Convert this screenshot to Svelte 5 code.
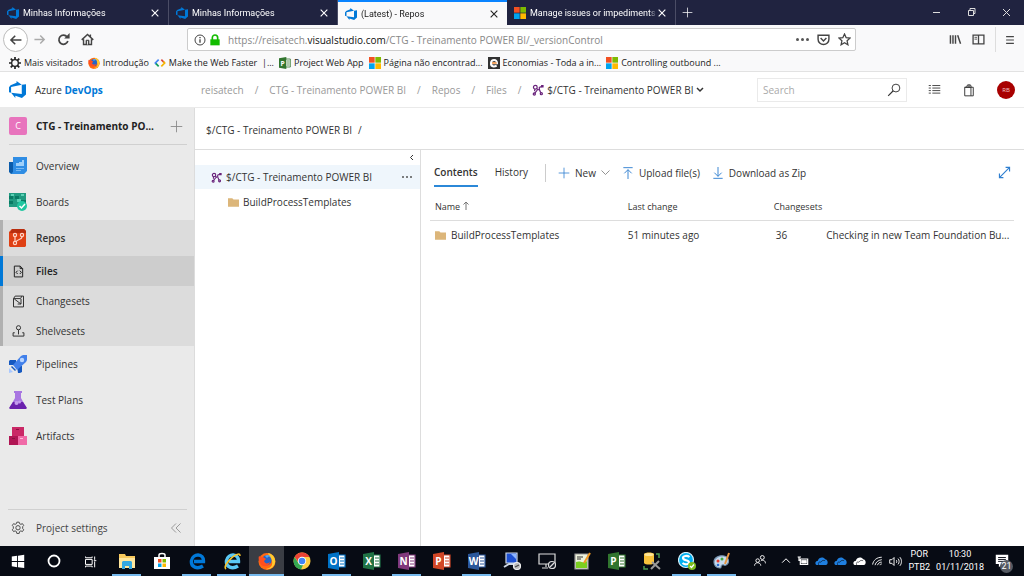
<script lang="ts">
	type Tab = { title: string; icon: string; active?: boolean };
	type NavItem = { label: string; icon: string; kind?: 'hub' | 'sub'; current?: boolean };
	type App = { name: string; running?: boolean; active?: boolean };

	const tabs: Tab[] = [
		{ title: 'Minhas Informações', icon: 'devops' },
		{ title: 'Minhas Informações', icon: 'devops' },
		{ title: '(Latest) - Repos', icon: 'devops', active: true },
		{ title: 'Manage issues or impediments', icon: 'microsoft' }
	];

	const bookmarks = [
		{ title: 'Mais visitados', icon: 'gear' },
		{ title: 'Introdução', icon: 'firefox' },
		{ title: 'Make the Web Faster  |...', icon: 'code' },
		{ title: 'Project Web App', icon: 'project' },
		{ title: 'Página não encontrad...', icon: 'microsoft' },
		{ title: 'Economias - Toda a in...', icon: 'economias' },
		{ title: 'Controlling outbound ...', icon: 'microsoft' }
	];

	const crumbs = ['reisatech', 'CTG - Treinamento POWER BI', 'Repos', 'Files'];

	const nav: NavItem[] = [
		{ label: 'Overview', icon: 'overview' },
		{ label: 'Boards', icon: 'boards' },
		{ label: 'Repos', icon: 'repos', kind: 'hub' },
		{ label: 'Files', icon: 'files', kind: 'sub', current: true },
		{ label: 'Changesets', icon: 'changesets', kind: 'sub' },
		{ label: 'Shelvesets', icon: 'shelvesets', kind: 'sub' },
		{ label: 'Pipelines', icon: 'pipelines' },
		{ label: 'Test Plans', icon: 'testplans' },
		{ label: 'Artifacts', icon: 'artifacts' }
	];

	const apps: App[] = [
		{ name: 'explorer', running: true },
		{ name: 'store' },
		{ name: 'edge', running: true },
		{ name: 'ie', running: true },
		{ name: 'firefox', running: true, active: true },
		{ name: 'chrome' },
		{ name: 'outlook', running: true },
		{ name: 'excel' },
		{ name: 'onenote', running: true },
		{ name: 'powerpoint' },
		{ name: 'word', running: true },
		{ name: 'remote' },
		{ name: 'monitor' },
		{ name: 'notepad' },
		{ name: 'project' },
		{ name: 'database' },
		{ name: 'skype', running: true },
		{ name: 'paint', running: true }
	];

	const office: Record<string, [string, string]> = {
		outlook: ['O', '#0072c6'],
		excel: ['X', '#217346'],
		onenote: ['N', '#80397b'],
		powerpoint: ['P', '#d24726'],
		word: ['W', '#2b579a'],
		project: ['P', '#31752f']
	};

	let search = $state('');
	let url = $state('https://reisatech.visualstudio.com/CTG - Treinamento POWER BI/_versionControl');
	let urlFocused = $state(false);
</script>

{#snippet icon(name: string, size: number)}
	<svg class="icon" width={size} height={size} viewBox="0 0 18 18" fill="none" stroke="currentColor" stroke-width="1.2" aria-hidden="true">
		{#if name === 'devops'}
			<path fill="#0078d7" stroke="none" transform="scale(.75)" d="M0 8.877L2.247 5.910l8.405-3.416V.022l7.370 5.393L2.966 8.338v8.225L0 15.707zm24-4.450v14.651l-5.753 4.900-9.303-3.057v3.056l-5.978-7.416 15.057 1.798V5.415z" />
		{:else if name === 'microsoft'}
			<g stroke="none">
				<path fill="#f25022" d="M0 0h8.500v8.500H0z" /><path fill="#7fba00" d="M9.500 0H18v8.500H9.500z" />
				<path fill="#00a4ef" d="M0 9.500h8.500V18H0z" /><path fill="#ffb900" d="M9.500 9.500H18V18H9.500z" />
			</g>
		{:else if name === 'gear'}
			<circle cx="9" cy="9" r="5" stroke-width="2" />
			<path stroke-width="2.600" d="M9 0v4M9 14v4M0 9h4M14 9h4M2.600 2.600l3 3M12.400 12.400l3 3M2.600 15.400l3-3M12.400 5.600l3-3" />
		{:else if name === 'settings'}
			<path d="M7.500 1.500h3l.6 2 1.600.8 2-.9 1.600 2.300-1.300 1.600v2.400l1.300 1.600-1.600 2.300-2-.9-1.600.8-.6 2.500h-3l-.6-2.500-1.600-.8-2 .9-1.600-2.300L3 9.700V7.300L1.700 5.700l1.600-2.300 2 .9 1.600-.8z" />
			<circle cx="9" cy="8.700" r="2.800" />
		{:else if name === 'firefox'}
			<g stroke="none">
				<circle cx="9" cy="9.500" r="8.500" fill="#ff6a13" />
				<path fill="#ffcb2f" d="M10 1c5 1 8 5 7 10-1 4-5 7-9 6 5-1 7-4 6-8C13 5 11 5 10 1z" />
				<circle cx="8.500" cy="8.500" r="5" fill="#2464c8" />
				<path fill="#ff4f1f" d="M1 4c1 1 2 1 4 1l3 2-2 2c1 3 4 3 6 1-1 5-8 6-10 1C1 9 0 6 1 4z" />
				<path fill="#4ba7f4" d="M7 4c2-2 5-1 6 1-2-1-3 0-4 1z" />
			</g>
		{:else if name === 'code'}
			<path stroke="#4285f4" stroke-width="2.500" d="M7 4L2 9l2 2" /><path stroke="#0f9d58" stroke-width="2.500" d="M3 10l4 4" />
			<path stroke="#db4437" stroke-width="2.500" d="M11 4l4 4" /><path stroke="#f4b400" stroke-width="2.500" d="M11 14l5-5-2-2" />
		{:else if name === 'economias'}
			<path fill="#333" stroke="none" d="M0 0h18v18H0z" />
			<path stroke="#fff" stroke-width="3" d="M5 9.500h8.500C14 3 5 3 4.500 9s5 6 8.500 4" /><path stroke="#f58220" stroke-width="2" d="M6 9h7" />
		{:else if name === 'overview'}
			<g stroke="none">
				<path fill="#0b5cab" d="M0 5h6v12H2l-2-2z" /><path fill="#2f8de4" d="M4 0h14v14l-3 3H2l2-2z" />
				<path fill="#9fd0fa" d="M7 6h3v3H7zM10 5h3v4h-3zM13 3h2v6h-2z" /><path fill="#78b9f2" d="M7 11h8v1H7zM7 13h5v1H7z" />
			</g>
		{:else if name === 'boards'}
			<g stroke="none">
				<path fill="#219b81" d="M0 0h17v14H0z" /><path fill="#087a64" d="M0 3h4v3H0zM6 3h4v3H6zM0 8h4v3H0zM12 7h5v4h-5z" />
				<path fill="#5bd1b5" d="M2 1h3v2H2zM8 6h4v3H8zM12 1h3v2h-3z" /><circle cx="13" cy="13" r="5" fill="#20c6a0" />
			</g>
			<path stroke="#fff" stroke-width="1.500" d="M10.500 13l2 2 3.500-4" />
		{:else if name === 'repos'}
			<path fill="#df4014" stroke="none" d="M3 0h12l2 2v15l-1 1H1l-1-1V3z" /><path fill="#b82d0e" stroke="none" d="M3 0h12l2 2v2H1z" />
			<g stroke="#ffd5c7"><circle cx="6" cy="6" r="1.600" /><circle cx="13" cy="6" r="1.600" /><circle cx="6" cy="14" r="1.600" /><path d="M6 8v4M13 8c0 3-5 2-6 5" /></g>
		{:else if name === 'files'}
			<path d="M4 2.500h7l3 3v10H4zM11 2.500v3h3M8 8l-2 2 2 2M10.500 8l2 2-2 2" />
		{:else if name === 'changesets'}
			<path d="M3 15.500V5.500l2-3h10v13zM3 5.500h8.500l1.500-3M4 6l8 6M12 6v6H8" />
		{:else if name === 'shelvesets'}
			<circle cx="9" cy="4.500" r="2.500" /><path d="M9 7v5.500M2.500 10.500v4h13v-4M2.500 10.500h2M13.500 10.500h2" />
		{:else if name === 'pipelines'}
			<g stroke="none">
				<path fill="#1558c0" d="M1 5h6v5H0V6zM8 11h5v6l-2 1H9z" /><path fill="#4280ea" d="M4 10l8-9 2-1h4v5l-1 2-9 8z" />
				<path fill="#1558c0" d="M3 11l4 4-1 1-4-4z" /><circle cx="13" cy="5" r="2.200" fill="#b9d5ff" />
				<path fill="#a9c8ff" d="M0 13l4 4-4 1z" />
			</g>
		{:else if name === 'testplans'}
			<g stroke="none">
				<path fill="#a876e1" d="M5 0h8v2h-1v5l5 9-1 2H2l-1-2 5-9V2H5z" /><path fill="#6a20ad" d="M4 11h10l4 6-1 1H1l-1-1z" />
				<circle cx="7.500" cy="12" r="2" fill="#c49bed" /><circle cx="10.500" cy="11" r="1.500" fill="#c49bed" />
			</g>
		{:else if name === 'artifacts'}
			<g stroke="none">
				<path fill="#ca2866" d="M3 0h12v9H3z" /><path fill="#b01554" d="M0 9h9v9H0z" /><path fill="#f06aa7" d="M9 9h9v9H9z" />
				<path fill="#8e0d40" d="M7 2h3v1H7zM3 11h3v1H3z" /><path fill="#ffb9d7" d="M11 11h3v1h-3z" />
			</g>
		{:else if name === 'branch'}
			<g stroke="#68217a" stroke-width="1.800">
				<circle cx="5" cy="5" r="2.800" /><circle cx="3.500" cy="15" r="1.600" /><circle cx="14" cy="14.500" r="1.600" />
				<path d="M15 3.500l-4 1.500v3l2 5M7 7l3 2M8 9l-4 5M4 8v3" /><path fill="#68217a" d="M14.500 2.500h2v2h-2z" />
			</g>
		{:else if name === 'folder'}
			<path fill="#dcb67a" stroke="none" d="M0 2h7l2 2h9v12H0z" />
		{:else if name === 'plus'}
			<path d="M9 1v16M1 9h16" />
		{:else if name === 'close'}
			<path stroke-width="2" d="M3 3l12 12M15 3L3 15" />
		{:else if name === 'chevron'}
			<path stroke-width="1.600" d="M1 5l8 8 8-8" />
		{:else if name === 'upload'}
			<path stroke-width="1.400" d="M2 1h14M9 18V4M3.500 9.500L9 4l5.500 5.500" />
		{:else if name === 'download'}
			<path stroke-width="1.400" d="M2 17h14M9 0v14M3.500 8.500L9 14l5.500-5.500" />
		{:else if name === 'expand'}
			<path stroke-width="1.600" d="M2 16L16 2M10.500 2H16v5.500M2 10.500V16h5.500" />
		{:else if name === 'back'}
			<path stroke-width="2" d="M16 9H3M8 3.500L2.500 9 8 14.500" />
		{:else if name === 'forward'}
			<path stroke-width="2" d="M2 9h13M10 3.500L15.500 9 10 14.500" />
		{:else if name === 'reload'}
			<path stroke-width="2.400" d="M14 5.500A6.300 6.300 0 1 0 15 11" /><path fill="currentColor" stroke="none" d="M10 7.500h7.500V0z" />
		{:else if name === 'home'}
			<path stroke-width="2" d="M1 9.500L9 2l8 7.500M3.500 8.500V16h11V8.500M13 2v4" /><path fill="currentColor" d="M7 10h4v6H7z" /><path stroke="#fff" d="M9 11v5" />
		{:else if name === 'info'}
			<circle cx="9" cy="9" r="7.500" stroke-width="1.500" /><path stroke-width="2" d="M9 8v5M9 4.500v2" />
		{:else if name === 'lock'}
			<path stroke="#12bc00" stroke-width="2.500" d="M5 9V5.500a4 4 0 0 1 8 0V9" /><path fill="#12bc00" stroke="none" d="M2 8h14v9H2z" />
		{:else if name === 'pocket'}
			<path stroke-width="2" d="M1.500 3h15v5.500a7.500 7.500 0 0 1-15 0zM5 7l4 4 4-4" />
		{:else if name === 'star'}
			<path stroke-width="1.800" d="M9 1.500l2.300 5 5.200.6-3.900 3.700 1.100 5.500L9 13.500l-4.700 2.800 1.100-5.500L1.500 7.100l5.200-.6z" />
		{:else if name === 'library'}
			<path stroke-width="2" d="M2 3v12M5.500 3v12M9 3v12M12 3l4 12" />
		{:else if name === 'sidebar'}
			<path stroke-width="1.800" d="M1.500 3h15v12h-15zM9 3v12" /><path d="M3.500 6H7M3.500 8.500H7" />
		{:else if name === 'menu'}
			<path stroke-width="2" d="M2 3h14M2 9h14M2 15h14" />
		{:else if name === 'search'}
			<circle cx="11.500" cy="6.500" r="5" /><path stroke-width="1.500" d="M8 10l-6.500 6.500" />
		{:else if name === 'list'}
			<path d="M6 3.500h11M6 7h11M6 10.500h11M6 14h11M1 3.500h3M1 7h3M1 10.500h3M1 14h3" />
		{:else if name === 'bag'}
			<path d="M3.500 5.500h8v11h-8zM3.500 5.500h11v11h-3M6 5.500l1-3h4l1 3M9 5.500V2" />
		{:else if name === 'start'}
			<path fill="#fff" stroke="none" d="M2 4l6-1v6H2zM9 3l7-1v7H9zM2 10h6v6l-6-1zM9 10h7v7l-7-1z" />
		{:else if name === 'cortana'}
			<circle cx="9" cy="9" r="5.500" stroke-width="1.800" />
		{:else if name === 'taskview'}
			<path d="M3 6.500h8v6H3zM3 3v1.500h8V3M3 16v-1.500h8V16M14 3v4M14 9v7M13 8h3" />
		{:else if name === 'explorer'}
			<g stroke="none"><path fill="#f7c95c" d="M1 2h6l1 2h9v12H1z" /><path fill="#ffe69c" d="M1 6h16v10H1z" /><path fill="#35a8df" d="M4 10l1-1h8l1 1v7h-3v-3H7v3H4z" /></g>
		{:else if name === 'store'}
			<path fill="#fff" stroke="none" d="M1 5h16v12H1z" /><path stroke="#fff" stroke-width="1.500" d="M6 6V3c0-2 6-2 6 0v3" />
			<g stroke="none"><path fill="#f25022" d="M5 7h3.500v3.500H5z" /><path fill="#7fba00" d="M9.500 7H13v3.500H9.500z" /><path fill="#00a4ef" d="M5 11.500h3.500V15H5z" /><path fill="#ffb900" d="M9.500 11.500H13V15H9.500z" /></g>
		{:else if name === 'edge' || name === 'ie'}
			<path stroke={name === 'edge' ? '#0078d7' : '#5bc9f5'} stroke-width="3.400" d="M6 9.500h9.500C16 1 5 1 3.500 8.500c-1 7 6 9 11.500 5.500" />
			{#if name === 'ie'}
				<path stroke="#f6c229" stroke-width="1.600" d="M3 17c-4-3 8-15 13-15 1 0 1 1 1 2" />
			{/if}
		{:else if name === 'chrome'}
			<g stroke="none"><circle cx="9" cy="9" r="8.500" fill="#ffcd40" /><path fill="#ea4335" d="M1.600 5a8.500 8.500 0 0 1 15 0H9L6 11z" /><path fill="#34a853" d="M1.600 5L6 12l4 1-2 4.500A8.500 8.500 0 0 1 1.600 5z" /><circle cx="9" cy="9" r="4.200" fill="#fff" /><circle cx="9" cy="9" r="3.300" fill="#4285f4" /></g>
		{:else if office[name]}
			<path fill="#fff" stroke={office[name][1]} d="M9 3h8v12H9z" /><path stroke={office[name][1]} d="M12 6h4M12 9h4M12 12h4" />
			<path fill={office[name][1]} stroke="none" d="M0 2l11-2v18L0 16z" />
			<text x="5.500" y="13" text-anchor="middle" fill="#fff" stroke="none" font-size="10" font-weight="700">{office[name][0]}</text>
		{:else if name === 'remote'}
			<path fill="#1c4fd0" stroke="#cdd7e4" d="M3 1h11v10H3z" /><path fill="#8bb4ff" stroke="none" d="M8 2h5v5z" /><path stroke="#cdd7e4" stroke-width="2" d="M1 15l5-3h6" /><circle cx="14" cy="14" r="3.500" fill="#bbb" stroke="#eee" /><path stroke="#444" d="M12 15l4-2" />
		{:else if name === 'monitor'}
			<path stroke="#ddd" d="M1 2h16v10H1zM8 12v3M4 16h6" /><circle cx="14" cy="13" r="3.500" fill="#111722" stroke="#ddd" /><path stroke="#ddd" d="M12 15l4-4" />
		{:else if name === 'notepad'}
			<path fill="#eef3dd" stroke="#999" d="M2 2h13v15H2z" /><path fill="#7bcf20" stroke="none" d="M3 10c4-2 8 2 11-1v7H3z" /><path stroke="#333" d="M4 5h6M4 7h4" /><path stroke="#f29a24" stroke-width="2" d="M17 1l-6 10" />
		{:else if name === 'database'}
			<path fill="#f8c23b" stroke="none" d="M1 2c1-2 9-2 10 0v9c-1 2-9 2-10 0z" /><ellipse cx="6" cy="2.500" rx="4.500" ry="1.500" fill="#ffe699" stroke="none" /><path stroke="#4f9c4f" stroke-width="1.500" d="M13 2h3v4M1 14v3h4" /><path stroke="#999" stroke-width="2" d="M8 17l8-8M9 10l8 7" />
		{:else if name === 'skype'}
			<circle cx="8" cy="8" r="7.500" fill="#00aff0" stroke="#d6f2fd" /><path stroke="#fff" stroke-width="2.200" d="M11.500 5C9 3 5 4 5 6c0 3 6 1.500 6 4.500 0 2-4 2.500-6.500.5" /><circle cx="14" cy="14" r="4" fill="#7cbb1c" stroke="none" /><path stroke="#fff" d="M12 14l1.500 1.500L16 12.500" />
		{:else if name === 'paint'}
			<path fill="#c7dcef" stroke="#7896b3" d="M1 10c0-4 5-7 10-6s6 7 2 9c-2 1-2-1-4 0s0 3-2 3c-4 0-6-3-6-6z" />
			<g stroke="none"><circle cx="5" cy="9" r="1.500" fill="#e33e32" /><circle cx="9" cy="7" r="1.500" fill="#42a83c" /><circle cx="5" cy="13" r="1.300" fill="#2e6ed0" /></g><path stroke="#e79642" stroke-width="2" d="M16 1l-4 11" />
		{:else if name === 'people'}
			<circle cx="12" cy="4.500" r="2.500" /><circle cx="6" cy="8.500" r="2.300" /><path d="M2 15c0-5 8-5 8 0M10 9c2-2 6-1 6 3" />
		{:else if name === 'up'}
			<path stroke-width="1.800" d="M2 12l7-7 7 7" />
		{:else if name === 'battery'}
			<path stroke-width="1.800" d="M5 6h11v8H5zM16 8v4M1 3h5M3 3v5h3" /><path fill="currentColor" d="M7 8h7v4H7z" />
		{:else if name === 'cloud'}
			<path fill="currentColor" stroke="none" d="M2 14c-3-2-1-6 2-6 1-5 8-6 10-2 4 0 5 7 1 8z" /><path stroke="#070b14" stroke-width=".8" d="M5 14c-1-4 1-5 3-4 2-3 4-3 6-2" />
		{:else if name === 'wifi'}
			<path stroke-width="1.500" d="M1 14C2 7 8 2 16 2M5 15c1-5 5-8 11-9M9 15c1-3 3-5 7-5M13 15c0-1 1-2 3-2" />
		{:else if name === 'volume'}
			<path stroke-width="1.300" d="M1 6.500h3l3-3v11l-3-3H1zM10 7c1 1 1 3 0 4M12.500 5c2 2 2 6 0 8M15 3c3 3 3 9 0 12" />
		{:else if name === 'message'}
			<path fill="#fff" stroke="none" d="M1 1h16v12H9l-4 4v-4H1z" /><path stroke="#070b14" d="M4 4.500h10M4 7h10M4 9.500h7" />
		{/if}
	</svg>
{/snippet}

<div class="screen">
	<div class="tabbar">
		{#each tabs as tab}
			<div class="tab" class:active={tab.active}>
				{@render icon(tab.icon, 12)}
				<span class="title">{tab.title}</span>
				<button aria-label="Close tab">{@render icon('close', 10)}</button>
			</div>
		{/each}
		<button class="new-tab" aria-label="New tab">{@render icon('plus', 11)}</button>
		<div class="window-controls">
			<button aria-label="Minimize"><svg width="9" height="9" viewBox="0 0 9 9" stroke="#ddd"><path d="M1 4.500h7" /></svg></button>
			<button aria-label="Restore"><svg width="9" height="9" viewBox="0 0 9 9" stroke="#ddd" fill="none"><path d="M1.500 2.500h5v5h-5zM3 2.500v-2h5v5H6.500" /></svg></button>
			<button aria-label="Close"><svg width="9" height="9" viewBox="0 0 9 9" stroke="#ddd"><path d="M1 1l7 7M8 1L1 8" /></svg></button>
		</div>
	</div>

	<div class="toolbar">
		<button class="back" aria-label="Back">{@render icon('back', 14)}</button>
		<button class="forward" aria-label="Forward">{@render icon('forward', 13)}</button>
		<button aria-label="Reload">{@render icon('reload', 13)}</button>
		<button aria-label="Home">{@render icon('home', 13)}</button>
		<div class="url" class:editing={urlFocused}>
			{@render icon('info', 12)}
			{@render icon('lock', 12)}
			<div class="address">
				<input aria-label="Address" bind:value={url} onfocus={() => (urlFocused = true)} onblur={() => (urlFocused = false)} />
				{#if !urlFocused}
					<div class="display" aria-hidden="true">https://reisatech.<b>visualstudio.com</b>/CTG - Treinamento POWER BI/_versionControl</div>
				{/if}
			</div>
			<button class="dots" aria-label="Page actions"><i></i><i></i><i></i></button>
			<button aria-label="Save to Pocket">{@render icon('pocket', 13)}</button>
			<button aria-label="Bookmark">{@render icon('star', 13)}</button>
		</div>
		<div class="tools">
			<button aria-label="Library">{@render icon('library', 13)}</button>
			<button aria-label="Sidebars">{@render icon('sidebar', 13)}</button>
			<button class="menu" aria-label="Menu">{@render icon('menu', 10)}</button>
		</div>
	</div>

	<div class="bookmarks">
		{#each bookmarks as b}
			<a href="#bookmark">{@render icon(b.icon, 12)}<span>{b.title}</span></a>
		{/each}
	</div>

	<header>
		<a class="brand" href="#home">{@render icon('devops', 17)}<span>Azure <b>DevOps</b></span></a>
		<nav class="crumbs" aria-label="Breadcrumb">
			{#each crumbs as crumb}
				<a href="#crumb">{crumb}</a><span class="slash">/</span>
			{/each}
			<button>{@render icon('branch', 12)}$/CTG - Treinamento POWER BI <svg width="8" height="6" viewBox="0 0 8 6" fill="none" stroke="#333" stroke-width="1.500"><path d="M1 1l3 3 3-3" /></svg></button>
		</nav>
		<label class="search">
			<input type="text" placeholder="Search" aria-label="Search" bind:value={search} />
			{@render icon('search', 14)}
		</label>
		<button class="head-icon" aria-label="Work items">{@render icon('list', 13)}</button>
		<button class="head-icon" aria-label="Marketplace">{@render icon('bag', 14)}</button>
		<button class="avatar">RB</button>
	</header>

	<div class="body">
		<aside>
			<div class="project">
				<span class="badge">C</span>
				<a href="#project">CTG - Treinamento PO...</a>
				<button aria-label="Add">{@render icon('plus', 13)}</button>
			</div>
			<nav class="side">
				{#each nav as item}
					<a href="#{item.icon}" class={item.kind} class:current={item.current}>
						<span class="slot">{@render icon(item.icon, item.kind === 'sub' ? 15 : 18)}</span>
						{item.label}
					</a>
				{/each}
			</nav>
			<div class="settings">
				<a href="#settings"><span class="slot">{@render icon('settings', 14)}</span>Project settings</a>
				<button aria-label="Collapse menu"><svg width="10" height="10" viewBox="0 0 10 10" fill="none" stroke="#999"><path d="M5 0.500L0.500 5 5 9.500M9.500 0.500L5 5l4.500 4.500" /></svg></button>
			</div>
		</aside>

		<main>
			<div class="path"><a href="#root">$/CTG - Treinamento POWER BI</a><span>/</span></div>
			<div class="split">
				<section class="tree" aria-label="Folders">
					<button class="collapse" aria-label="Collapse tree"><svg width="5" height="7" viewBox="0 0 5 7" fill="none" stroke="#333"><path d="M4 1L1.500 3.500 4 6" /></svg></button>
					<div class="node selected">
						{@render icon('branch', 11)}
						<a href="#root">$/CTG - Treinamento POWER BI</a>
						<button class="dots" aria-label="More"><i></i><i></i><i></i></button>
					</div>
					<div class="node child">{@render icon('folder', 11)}<a href="#templates">BuildProcessTemplates</a></div>
				</section>

				<section class="content">
					<div class="actions">
						<a class="pivot selected" href="#contents">Contents</a>
						<a class="pivot" href="#history">History</a>
						<div class="commands">
							<button><span class="blue">{@render icon('plus', 12)}</span>New<span class="drop">{@render icon('chevron', 9)}</span></button>
							<button><span class="blue">{@render icon('upload', 12)}</span>Upload file(s)</button>
							<button><span class="blue">{@render icon('download', 12)}</span>Download as Zip</button>
						</div>
						<button class="full blue" aria-label="Full screen">{@render icon('expand', 13)}</button>
					</div>
					<table>
						<thead>
							<tr><th>Name <svg width="6" height="9" viewBox="0 0 6 9" fill="none" stroke="#777"><path d="M3 9V1M0.500 3.500L3 1l2.500 2.500" /></svg></th><th>Last change</th><th>Changesets</th><th></th></tr>
						</thead>
						<tbody>
							<tr>
								<td><a href="#templates">{@render icon('folder', 11)}BuildProcessTemplates</a></td>
								<td>51 minutes ago</td>
								<td class="count">36</td>
								<td>Checking in new Team Foundation Bu...</td>
							</tr>
						</tbody>
					</table>
				</section>
			</div>
		</main>
	</div>

	<footer>
		<button class="system" aria-label="Start">{@render icon('start', 16)}</button>
		<button class="system" aria-label="Cortana">{@render icon('cortana', 18)}</button>
		<button class="system" aria-label="Task view">{@render icon('taskview', 15)}</button>
		<div class="apps">
			{#each apps as app}
				<button class="app" class:running={app.running} class:active={app.active} aria-label={app.name}>{@render icon(app.name, 18)}</button>
			{/each}
		</div>
		<div class="tray">
			<span class="people">{@render icon('people', 14)}</span>
			{@render icon('up', 10)}
			{@render icon('battery', 12)}
			<span class="onedrive">{@render icon('cloud', 13)}</span>
			<span class="onedrive">{@render icon('cloud', 13)}</span>
			{@render icon('cloud', 13)}
			{@render icon('wifi', 11)}
			{@render icon('volume', 13)}
			<div class="clock">POR<br />PTB2</div>
			<div class="clock">10:30<br />01/11/2018</div>
			<button class="notifications" aria-label="Notifications">{@render icon('message', 14)}<span>21</span></button>
		</div>
	</footer>
</div>

<style>
	:global(body) {
		margin: 0;
	}

	.screen {
		display: flex;
		flex-direction: column;
		min-height: 100vh;
		font-family: 'Open Sans', 'Noto Sans', sans-serif;
		font-size: 10px;
		line-height: 14px;
		color: #333;
		background: #fff;
		white-space: nowrap;
	}

	.screen * {
		box-sizing: border-box;
	}

	button,
	input {
		font: inherit;
		color: inherit;
		border: 0;
		padding: 0;
		margin: 0;
		background: none;
	}

	button {
		display: flex;
		align-items: center;
		justify-content: center;
	}

	a {
		color: inherit;
		text-decoration: none;
	}

	svg {
		flex: none;
		display: block;
	}

	.tabbar {
		display: flex;
		height: 25px;
		background: #202340;
		color: #fff;
		font-family: Roboto, 'Open Sans', sans-serif;
		font-size: 9px;
	}

	.tab {
		display: flex;
		align-items: center;
		flex: 0 1 169px;
		min-width: 0;
		gap: 4px;
		padding: 0 8px 0 7px;
		border-right: 1px solid #4b4d66;
	}

	.tab.active {
		background: #f9f9fa;
		color: #222;
		border-top: 2px solid #0a84ff;
		border-right: 0;
	}

	.title {
		flex: 1;
		min-width: 0;
		overflow: hidden;
		mask-image: linear-gradient(to left, transparent, #000 8px);
	}

	/* the close button sits over the faded end of the title */
	.tab button {
		margin-left: -4px;
	}

	.new-tab {
		width: 22px;
	}

	.window-controls {
		display: flex;
		margin-left: auto;
	}

	.window-controls button {
		width: 35px;
	}

	.toolbar {
		display: flex;
		align-items: center;
		height: 29px;
		padding: 0 0 0 3px;
		gap: 11px;
		background: #f9f9fa;
		color: #444;
	}

	.toolbar .back {
		width: 25px;
		height: 25px;
		border: 1px solid #bbb;
		border-radius: 50%;
		background: #fff;
		margin-right: -6px;
	}

	.forward {
		color: #aaa;
	}

	.url {
		display: flex;
		align-items: center;
		flex: 1;
		gap: 3px;
		height: 23px;
		margin-left: 82px;
		padding: 0 4px 0 6px;
		border: 1px solid #ccc;
		border-radius: 2px;
		background: #fff;
	}

	.url button {
		margin-left: 5px;
	}

	.address {
		position: relative;
		flex: 1;
		margin-left: 4px;
		color: #888;
	}

	.address input {
		width: 100%;
		height: 18px;
		outline: none;
		color: transparent;
	}

	.editing .address input {
		color: #222;
	}

	.display {
		position: absolute;
		inset: 0;
		line-height: 18px;
		pointer-events: none;
		overflow: hidden;
	}

	.display b {
		font-weight: 400;
		color: #111;
	}

	.dots {
		display: flex;
		gap: 2px;
	}

	.dots i {
		width: 2px;
		height: 2px;
		border-radius: 50%;
		background: #555;
	}

	.url .dots i {
		width: 3px;
		height: 3px;
	}

	.tools {
		display: flex;
		align-items: center;
		gap: 10px;
		margin-left: 82px;
	}

	.tools .menu {
		width: 29px;
		height: 25px;
		border-left: 1px solid #ddd;
	}

	.bookmarks {
		display: flex;
		gap: 5px;
		height: 18px;
		padding: 0 9px;
		align-items: center;
		background: #f9f9fa;
		border-bottom: 1px solid #e2e2e2;
		font-size: 9px;
		color: #222;
	}

	.bookmarks a {
		display: flex;
		align-items: center;
		gap: 3px;
		white-space: pre;
	}

	header {
		display: flex;
		align-items: center;
		height: 36px;
		padding: 0 9px 0 9px;
		border-bottom: 1px solid #eaeaea;
	}

	.brand {
		display: flex;
		align-items: center;
		gap: 9px;
		width: 192px;
	}

	.brand b {
		color: #0078d7;
	}

	.crumbs {
		display: flex;
		align-items: center;
		flex: 1;
		color: #999;
	}

	.slash {
		margin: 0 11px;
	}

	.crumbs button {
		gap: 3px;
		color: #333;
	}

	.search {
		display: flex;
		align-items: center;
		width: 150px;
		height: 24px;
		padding: 0 5px;
		border: 1px solid #eaeaea;
	}

	.search input {
		flex: 1;
		width: 0;
	}

	.search input::placeholder {
		color: #aaa;
		opacity: 1;
	}

	.head-icon {
		margin-left: 21px;
	}

	.avatar {
		width: 18px;
		height: 18px;
		margin-left: 21px;
		border-radius: 50%;
		background: #a80000;
		color: #f2c4c4;
		font-size: 6px;
	}

	.body {
		display: flex;
		flex: 1;
	}

	aside {
		display: flex;
		flex-direction: column;
		width: 195px;
		background: #eaeaea;
		border-right: 1px solid #dcdcdc;
	}

	.project {
		display: flex;
		align-items: center;
		gap: 9px;
		height: 37px;
		margin: 0 7px 3px 9px;
		border-bottom: 1px solid #d0d0d0;
		font-weight: 700;
		color: #222;
	}

	.project button {
		margin-left: auto;
		margin-right: 4px;
		color: #888;
	}

	.badge {
		width: 18px;
		line-height: 18px;
		border-radius: 2px;
		background: #e874bd;
		color: #fff;
		font-size: 9px;
		font-weight: 400;
		text-align: center;
	}

	.side a,
	.settings a {
		display: flex;
		align-items: center;
		gap: 9px;
		height: 36px;
		padding-left: 9px;
	}

	.side .hub,
	.side .sub {
		padding-left: 6px;
		border-left: 3px solid #b0b0b0;
		background: #dcdcdc;
	}

	.side .hub {
		font-weight: 600;
	}

	.side .sub {
		height: 30px;
	}

	.side .current {
		border-color: #0078d7;
		background: #cdcdcd;
		font-weight: 600;
		color: #222;
	}

	.slot {
		display: flex;
		justify-content: center;
		width: 18px;
	}

	.settings {
		display: flex;
		margin: auto 7px 0 8px;
		border-top: 1px solid #d0d0d0;
	}

	.settings a {
		padding-left: 1px;
		color: #444;
	}

	.settings button {
		margin-left: auto;
		padding-right: 6px;
	}

	main {
		display: flex;
		flex-direction: column;
		flex: 1;
		min-width: 0;
	}

	.path {
		display: flex;
		align-items: center;
		gap: 6px;
		height: 42px;
		padding-left: 11px;
		padding-top: 3px;
		border-bottom: 1px solid #ddd;
	}

	.split {
		display: flex;
		flex: 1;
	}

	.tree {
		width: 226px;
		border-right: 1px solid #ddd;
	}

	.collapse {
		height: 15px;
		margin-left: auto;
		padding-right: 6px;
	}

	.node {
		display: flex;
		align-items: center;
		gap: 4px;
		height: 24px;
		padding: 0 8px 0 16px;
	}

	.node.selected {
		background: #eff6fc;
	}

	.node .dots {
		margin-left: auto;
	}

	.node.child {
		height: 26px;
		padding-left: 33px;
	}

	.content {
		flex: 1;
		min-width: 0;
		padding: 0 10px 0 9px;
	}

	.actions {
		display: flex;
		align-items: center;
		height: 45px;
		padding-left: 4px;
	}

	.pivot {
		margin-right: 17px;
		line-height: 26px;
		border-bottom: 2px solid transparent;
	}

	.pivot.selected {
		border-color: #2b88d8;
		font-weight: 600;
	}

	.commands {
		display: flex;
		gap: 12px;
		height: 18px;
		padding-left: 12px;
		border-left: 1px solid #ccc;
	}

	.commands button {
		gap: 5px;
	}

	.blue {
		color: #2f7fd0;
	}

	.drop {
		color: #777;
	}

	.full {
		margin-left: auto;
		margin-right: 3px;
	}

	table {
		width: 100%;
		table-layout: fixed;
		border-collapse: collapse;
	}

	th,
	td {
		padding: 0 0 0 5px;
		height: 30px;
		text-align: left;
		font-weight: 400;
	}

	th {
		height: 25px;
		border-bottom: 1px solid #ddd;
		font-size: 9px;
	}

	th:nth-child(1) {
		width: 33%;
	}

	th:nth-child(2) {
		width: 25%;
	}

	th:nth-child(3) {
		width: 9%;
	}

	th svg {
		display: inline-block;
	}

	td a {
		display: flex;
		align-items: center;
		gap: 5px;
	}

	.count {
		padding-left: 7px;
	}

	footer {
		display: flex;
		height: 30px;
		background: #070b14;
		color: #fff;
	}

	.system {
		width: 36px;
	}

	.apps {
		display: flex;
		margin-left: 1px;
	}

	.app {
		width: 35px;
	}

	.app.running {
		width: 29px;
		margin: 0 3px;
		border-bottom: 2px solid #76b9ed;
		padding-top: 2px;
	}

	.app.running.active {
		width: 35px;
		margin: 0;
		background: #3a3d44;
	}

	.tray {
		display: flex;
		align-items: center;
		gap: 6px;
		margin-left: auto;
		padding-right: 12px;
		font-family: Roboto, 'Open Sans', sans-serif;
		font-size: 9px;
		line-height: 13px;
		text-align: center;
	}

	.people {
		margin-right: 8px;
	}

	.onedrive {
		color: #1f7fe0;
	}

	.notifications {
		position: relative;
		width: 20px;
		margin-left: 2px;
	}

	.notifications span {
		position: absolute;
		left: 8px;
		top: 6px;
		width: 13px;
		line-height: 13px;
		border-radius: 50%;
		background: #555a63;
	}
</style>
